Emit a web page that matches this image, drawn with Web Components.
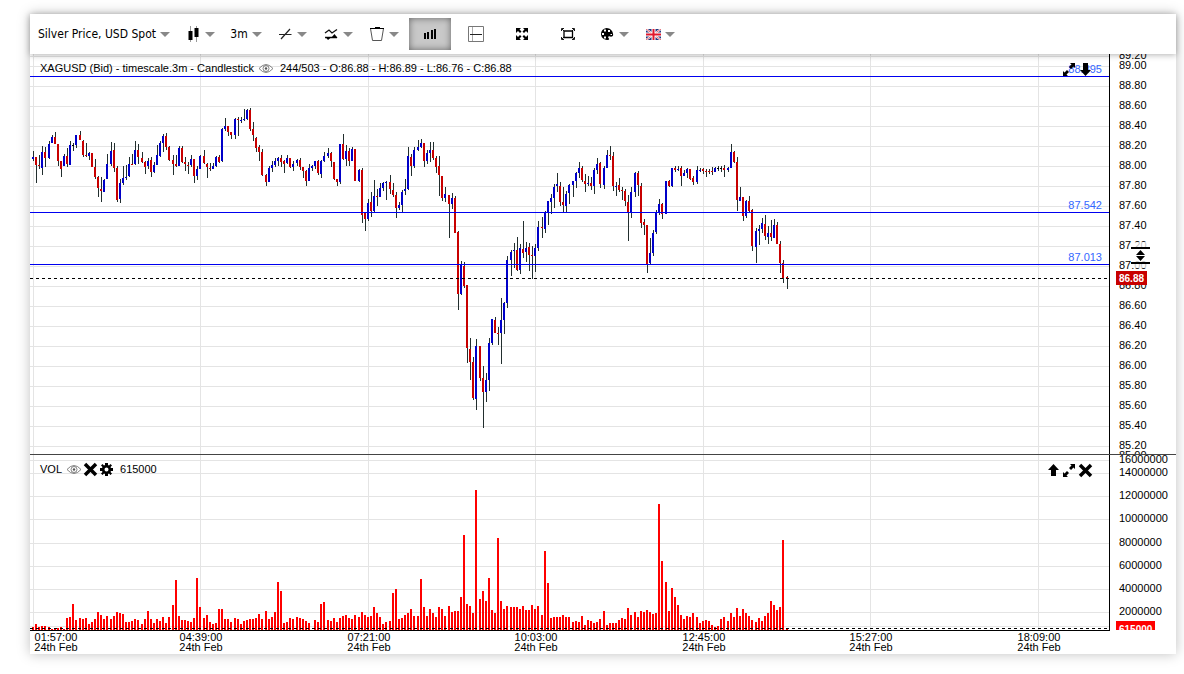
<!DOCTYPE html>
<html lang="en">
<head>
<meta charset="utf-8">
<title>Silver Price, USD Spot</title>
<style>
body {
    margin: 0;
    background: #fff;
    color: #000;
    font-family: "Liberation Sans", Arial, sans-serif;
    font-size: 11px;
}
</style>
</head>
<body>
<stock-chart>
    <chart-toolbar slot="toolbar">
        <tool-button label="Instrument" menu wide>Silver Price, USD Spot</tool-button>
        <tool-button label="Chart type" menu icon="candles"></tool-button>
        <tool-button label="Interval" menu>3m</tool-button>
        <tool-button label="Draw line" menu icon="line"></tool-button>
        <tool-button label="Indicators" menu icon="waves"></tool-button>
        <tool-button label="Remove" menu icon="trash"></tool-button>
        <tool-button label="Volume" pressed icon="bars"></tool-button>
        <tool-button label="Crosshair" icon="split"></tool-button>
        <tool-button label="Full window" icon="expand"></tool-button>
        <tool-button label="Fit" icon="frame"></tool-button>
        <tool-button label="Theme" menu icon="palette"></tool-button>
        <tool-button label="Language" menu icon="flag"></tool-button>
    </chart-toolbar>
    <price-pane>
        <pane-legend>
            XAGUSD (Bid) - timescale.3m - Candlestick
            <icon-button slot="tools" icon="eye" label="Show or hide"></icon-button>
            <span slot="value">244/503 - O:86.88 - H:86.89 - L:86.76 - C:86.88</span>
        </pane-legend>
        <icon-button slot="actions" icon="maximize" label="Maximize"></icon-button>
        <icon-button slot="actions" icon="down" label="Move down"></icon-button>
    </price-pane>
    <volume-pane>
        <pane-legend>
            VOL
            <icon-button slot="tools" icon="eye" label="Show or hide"></icon-button>
            <icon-button slot="tools" icon="cross" label="Remove"></icon-button>
            <icon-button slot="tools" icon="gear" label="Settings"></icon-button>
            <span slot="value">615000</span>
        </pane-legend>
        <icon-button slot="actions" icon="up" label="Move up"></icon-button>
        <icon-button slot="actions" icon="maximize" label="Maximize"></icon-button>
        <icon-button slot="actions" icon="cross" label="Remove"></icon-button>
    </volume-pane>
    <time-axis></time-axis>
</stock-chart>

<script>
// 54 bars (2h42m of 3 minute candles) between two time labels
const BAR_PITCH = 3.10086;
const FIRST_BAR = 3;
const BARS_PER_LABEL = 54;
const TIMES = ["01:57:00", "04:39:00", "07:21:00", "10:03:00", "12:45:00", "15:27:00", "18:09:00"];

// high, body top, body bottom, low in cents below 89.66; u = up, d = down, n = unchanged
const CANDLES = `
151,157,159,161u 157,157,165,183d 155,165,166,169d 146,152,168,175u 147,152,158,167d 141,144,158,159u
135,137,143,143u 132,137,144,144d 144,144,161,166d 161,161,169,177d 154,156,166,166u 148,156,164,167d
141,145,165,165u 143,145,146,151n 135,135,145,148u 131,135,140,140d 140,141,155,157d 143,155,156,157d
152,153,156,160u 153,153,167,167d 159,167,177,179d 176,177,188,197d 177,189,191,202d 179,180,192,192u
154,164,179,179u 142,151,164,166u 143,150,168,172d 166,168,200,202d 179,183,199,203u 166,178,183,185u
165,177,178,180u 157,164,176,177u 154,164,165,165d 141,150,164,165u 144,150,157,164d 152,158,162,163d
161,162,167,174d 158,161,166,169u 157,160,172,177d 162,165,172,173u 145,155,165,165u 141,143,156,157u
134,136,143,152u 133,136,147,150d 146,147,160,161d 155,160,164,175d 155,164,166,167d 146,148,166,166u
146,148,162,163d 157,162,164,171d 162,165,166,174d 155,159,165,167u 159,159,176,183d 166,169,176,180u
155,156,169,169u 150,156,163,164d 163,164,167,178d 163,168,169,171d 163,166,169,169u 156,157,166,167u
155,157,162,163d 128,129,161,162u 118,126,129,131u 126,126,132,136d 132,132,135,139d 118,119,135,139u
117,119,120,136d 117,120,121,123u 109,119,120,121u 109,110,119,120u 108,110,129,131d 122,129,135,141d
137,138,148,152d 145,147,152,161d 149,152,175,176d 174,175,182,186d 166,168,182,182u 161,165,168,172u
158,161,165,167u 157,158,161,166u 155,158,162,167d 160,161,164,173d 155,158,163,164u 158,158,167,168d
161,164,167,171u 159,160,163,166u 158,160,167,170d 167,167,171,178d 170,171,181,186d 164,168,181,181u
165,166,168,171u 161,161,166,169u 160,161,173,175d 160,161,174,178u 152,156,161,162u 148,153,156,158u
152,153,161,167d 162,162,179,180d 179,179,182,186d 144,144,182,184u 134,144,159,160d 145,151,159,166u
148,151,161,166d 147,149,161,161u 149,149,181,181d 169,170,181,182u 168,170,215,223d 212,212,219,231d
199,203,219,221u 192,202,211,217d 180,196,211,212u 189,196,197,206d 183,188,197,197u 182,183,188,191u
181,182,183,200u 175,182,189,194d 183,190,195,197d 192,195,208,218d 202,205,208,210u 190,192,205,212u
179,189,191,195u 147,156,189,190u 154,157,166,176d 147,150,166,168u 140,147,150,151u 139,143,147,148u
143,143,161,167d 150,153,161,164u 142,150,153,162u 142,150,158,160d 156,158,167,173d 156,166,175,196d
176,176,198,201d 187,194,198,202u 195,195,204,238d 193,198,204,209u 196,198,233,233d 231,232,294,310d
261,264,294,295u 262,266,286,288d 285,285,348,363d 338,349,362,380d 357,362,398,400d 339,346,399,410u
346,346,378,381d 366,378,392,428d 373,380,392,402u 338,343,380,391u 319,319,343,345u 317,320,333,333d
327,333,334,345d 298,320,333,364u 302,303,320,334u 256,260,303,308u 250,252,260,276u 243,250,251,268u
237,250,270,271d 244,248,270,274u 221,249,253,258d 242,248,252,262u 243,247,255,271d 246,255,256,279d
244,248,256,272u 221,227,248,251u 217,227,228,238d 211,212,229,233u 201,201,213,225u 194,198,202,214u
184,187,198,208u 173,184,186,192u 182,186,202,206d 187,202,205,212d 191,194,206,212u 184,185,193,204u
181,181,185,197u 172,173,181,188u 162,168,173,178u 166,168,180,182d 174,181,184,192d 176,183,184,186u
177,183,186,190d 168,170,186,194u 158,164,170,174u 162,163,184,188d 166,168,185,189u 150,155,168,168u
146,155,156,160d 152,156,186,191d 182,186,187,196u 178,185,190,192d 187,190,191,200d 189,191,201,206d
195,202,213,241d 187,192,213,218u 172,173,192,197u 171,173,185,196d 183,186,223,228d 219,222,225,235d
225,225,265,273d 238,253,263,265u 230,233,253,256u 210,213,232,234u 199,204,213,215u 203,204,214,219d
181,181,214,214u 180,181,186,187d 168,168,186,187u 166,168,170,172d 166,169,170,171u 166,168,176,186d
170,173,176,176u 168,169,173,178u 169,169,179,180d 176,178,182,185d 166,170,182,184u 168,170,171,172u
168,169,171,174d 169,171,172,177d 169,171,172,174d 167,171,172,175d 167,168,172,172u 166,168,169,171n
166,168,169,172n 165,168,170,177d 167,168,170,172u 144,152,168,168u 151,152,162,163d 157,162,200,211d
187,197,201,201u 197,197,216,221d 200,201,216,218u 196,201,211,213d 209,210,246,251d 228,231,247,263u
225,229,231,245u 218,223,229,233u 215,224,236,240d 226,233,237,244u 220,233,237,241d 219,225,238,238u
222,225,244,244d 241,244,263,273d 260,263,278,283d 276,277,278,289d`.trim().split(/\s+/);

// bar heights, one unit is about 86000 traded
const VOLUMES = [
    3, 6, 3, 4, 4, 3, 1, 2, 2, 3, 1, 12, 13, 26, 10, 12, 11, 12, 6, 8, 11, 18, 15, 11, 14, 11, 14, 18, 17, 16,
    8, 8, 9, 11, 10, 6, 11, 19, 11, 7, 11, 9, 13, 7, 13, 25, 50, 14, 10, 10, 9, 8, 12, 52, 23, 12, 15, 8, 6, 7,
    21, 21, 11, 11, 8, 12, 11, 6, 9, 10, 11, 11, 12, 16, 11, 19, 11, 13, 18, 48, 39, 7, 8, 12, 11, 13, 12, 11, 9, 7,
    0, 10, 8, 26, 28, 10, 9, 12, 8, 12, 14, 15, 12, 11, 15, 13, 18, 15, 13, 14, 23, 17, 13, 6, 8, 9, 37, 41, 11, 12,
    15, 17, 21, 14, 14, 51, 23, 14, 21, 17, 13, 23, 21, 14, 24, 18, 19, 19, 33, 95, 26, 24, 17, 140, 31, 39, 29, 52, 20, 17,
    92, 29, 21, 24, 23, 23, 23, 21, 24, 20, 20, 25, 21, 24, 15, 79, 47, 12, 13, 13, 13, 15, 13, 13, 8, 9, 8, 14, 5, 10,
    9, 7, 8, 11, 19, 5, 7, 7, 7, 10, 12, 11, 22, 15, 18, 13, 19, 18, 20, 18, 16, 17, 126, 69, 48, 19, 42, 33, 25, 15,
    11, 14, 13, 17, 13, 7, 9, 10, 9, 5, 3, 4, 11, 13, 9, 17, 13, 22, 14, 21, 17, 14, 10, 8, 12, 9, 14, 17, 29, 25,
    20, 23, 90, 1
];

const ICONS = {
    candles: `<path d="M5.500 0v16M11.500 0v16" stroke="#999"/><path d="M3.500 5h4v9h-4zM9.500 2h4v9h-4z"/>`,
    line: `<path d="M2 8.500h12.500M4 13l9-10" fill="none" stroke="#222" stroke-width="1.200"/>`,
    waves: `<path d="M2 7l4-3 3 3 5-3.500M2 11.500h12" fill="none" stroke="#111" stroke-width="1.300"/><path d="M2.500 11h6L5 14zM8 12l3.500-4 3 4z"/>`,
    trash: `<path d="M1.500 2.500h13l-2 12h-9z" fill="none" stroke="#555"/><path d="M6 1h5v1h4v1H1V2h5z"/>`,
    bars: `<path d="M2 7h2v6H2zM5 6h2v7H5zM9 4h2v9H9zM12 3h2v10h-2z"/>`,
    split: `<path d="M.5.5h15v15H.5z" fill="none" stroke="#777"/><path d="M4.500 1v14" stroke="#aaa"/><path d="M2 8h12v1H2z" fill="#222"/>`,
    expand: `<path d="M2 2h5L5.500 3.500 7.500 5.500 6 7 4 5 2 7zM14 2H9l1.500 1.500-2 2L10 7l2-2 2 2zM2 14h5l-1.500-1.500 2-2L6 9l-2 2-2-2zM14 14H9l1.500-1.500-2-2L10 9l2 2 2-2z"/>`,
    frame: `<path d="M4 5h8.500v6.500H4z" fill="none" stroke="#000" stroke-width="1.300"/><path d="M1.500 5V2.500H4M12 2.500h2.500V5M14.500 11v2.500H12M4 13.500H1.500V11M2 3l2 2M14 3l-2 2M14 13l-2-2M2 13l2-2" fill="none" stroke="#000" stroke-width=".9"/>`,
    palette: `<path fill-rule="evenodd" d="M7.500 2a6 6 0 1 0 1 12c2 0 2-1 1-2s0-2 1.500-1.500S15 10 14 8c0-3-3-6-6.500-6zM3 7h2v2H3zM5 3.500h2v2H5zM9 4h2v2H9zM5 10.500h2v2H5z"/><path d="M11.500 8h1.500v1h-1.500z" fill="#fff"/>`,
    flag: `<svg x="1" y="3" width="15" height="11" viewBox="0 0 15 11"><path d="M0 0h15v11H0z" fill="#24367d"/><path d="M0 0l15 11M15 0L0 11" stroke="#fff" stroke-width="2"/><path d="M0 0l15 11M15 0L0 11" stroke="#d8202f" stroke-width=".7"/><path d="M7.500 0v11M0 5.500h15" stroke="#fff" stroke-width="4"/><path d="M7.500 0v11M0 5.500h15" stroke="#e0182d" stroke-width="2"/></svg>`,
    eye: `<path d="M1 8.500q7-8 14 0q-7 8-14 0z" fill="none" stroke="#666" stroke-width=".8"/><circle cx="8" cy="8.500" r="3" fill="none" stroke="#666" stroke-width=".8"/><circle cx="8" cy="8.500" r="1.200" fill="#555"/>`,
    cross: `<path d="M3 3l11 11M14 3L3 14" stroke="#000" stroke-width="3.500"/>`,
    gear: `<path fill-rule="evenodd" d="M7 2h3v2l1 .5L12.500 3 14 4.500 12.500 6l.5 1h2v3h-2l-.5 1 1.500 1.500-1.500 1.500-1.500-1.500-1 .5v2H7v-2l-1-.5L4.500 14 3 12.500 4.500 11 4 10H2V7h2l.5-1L3 4.500 4.500 3 6 4.500 7 4zM8.500 6.500a2 2 0 1 0 0 4 2 2 0 0 0 0-4z"/>`,
    maximize: `<path d="M9 2h5v5l-1.500-1.500L10 8 8 6l2.500-2.500zM2 15v-5l1.500 1.500L6 9l2 2-2.500 2.500L7 15z"/>`,
    down: `<path d="M6 2h5v7h3l-5.500 6L3 9h3z"/>`,
    up: `<path d="M8.500 2L14 8h-3v6H6V8H3z"/>`
};

function icon(name) {
    return `<svg width="16" height="16" viewBox="0 0 16 16" aria-hidden="true">${ICONS[name] || ""}</svg>`;
}
function barX(index) {
    return FIRST_BAR + Math.round(index * BAR_PITCH);
}
function rect(x, y, width, height, cls) {
    return `<rect x="${x}" y="${y}" width="${width}" height="${height}" class="${cls}"/>`;
}
function verticalGrid() {
    return TIMES.map((t, i) => rect(barX(i * BARS_PER_LABEL), 0, 1, "100%", "grid")).join("");
}
function horizontalGrid(ticks) {
    return ticks.map(t => rect(0, t.y, "100%", 1, "grid")).join("");
}
function axisLabels(ticks) {
    return ticks.map(t => `<text x="9" y="${t.y + 3}">${t.text}</text>`).join("");
}
function dashedLine(y) {
    return `<path d="M0 ${y}h4000v1H0z" fill="url(#dash)"/>`;
}
const DASH_PATTERN = `<defs><pattern id="dash" width="6" height="8" patternUnits="userSpaceOnUse"><rect width="3" height="8"/></pattern></defs>`;

class StockChart extends HTMLElement {
    constructor() {
        super();
        this.attachShadow({ mode: 'open' });
        this.shadowRoot.innerHTML = `
          <style>
            :host { display: block; padding: 14px 8px 20px 30px; }
            .card {
              display: flex;
              flex-direction: column;
              background: #fff;
              box-shadow: 0 0 12px rgba(0, 0, 0, 0.25);
            }
          </style>
          <div class="card">
            <slot name="toolbar"></slot>
            <slot></slot>
          </div>
        `;
    }
}

class ChartToolbar extends HTMLElement {
    constructor() {
        super();
        this.attachShadow({ mode: 'open' });
        this.shadowRoot.innerHTML = `
          <style>
            :host {
              display: flex;
              gap: 4px;
              padding: 4px 3px;
              background: #fff;
              position: relative;
              z-index: 1;
              box-shadow: 0 1px 6px rgba(0, 0, 0, 0.3);
            }
          </style>
          <slot></slot>
        `;
    }
}

class ToolButton extends HTMLElement {
    constructor() {
        super();
        this.attachShadow({ mode: 'open' });
    }
    connectedCallback() {
        const menu = this.hasAttribute("menu");
        const pressed = this.hasAttribute("pressed");
        const name = this.getAttribute("icon");
        this.shadowRoot.innerHTML = `
          <style>
            :host { display: block; }
            button {
              display: flex;
              align-items: center;
              justify-content: center;
              gap: 4px;
              box-sizing: border-box;
              width: 42px;
              height: 32px;
              padding: 0;
              border: 0;
              background: none;
              color: #000;
              font: 12px "DejaVu Sans Condensed", "Noto Sans", sans-serif;
              white-space: nowrap;
            }
            :host([wide]) button { width: 142px; }
            button[aria-pressed="true"] {
              background: #c8c8c8;
              box-shadow: inset 0 0 7px rgba(0, 0, 0, 0.5);
            }
            .caret {
              border: 5px solid transparent;
              border-top-color: #888;
              border-bottom: 0;
            }
          </style>
          <button type="button" ${name ? `aria-label="${this.getAttribute("label")}"` : ""}
            ${menu ? 'aria-haspopup="menu"' : ""} ${pressed ? 'aria-pressed="true"' : ""}>
            ${name ? icon(name) : "<slot></slot>"}
            ${menu ? '<span class="caret"></span>' : ""}
          </button>
        `;
    }
}

class IconButton extends HTMLElement {
    constructor() {
        super();
        this.attachShadow({ mode: 'open' });
    }
    connectedCallback() {
        this.shadowRoot.innerHTML = `
          <style>
            :host { display: block; }
            button { display: block; padding: 0; border: 0; background: none; }
            svg { display: block; }
          </style>
          <button type="button" aria-label="${this.getAttribute("label")}">${icon(this.getAttribute("icon"))}</button>
        `;
    }
}

class PaneLegend extends HTMLElement {
    constructor() {
        super();
        this.attachShadow({ mode: 'open' });
        this.shadowRoot.innerHTML = `
          <style>
            :host { display: flex; align-items: center; height: 16px; }
            .tools { display: flex; padding: 0 6px 0 4px; }
          </style>
          <span><slot></slot></span>
          <div class="tools"><slot name="tools"></slot></div>
          <slot name="value"></slot>
        `;
    }
}

// common frame of a pane: plot, value axis, legend and actions over the plot
class ChartPane extends HTMLElement {
    constructor() {
        super();
        this.attachShadow({ mode: 'open' });
    }
    connectedCallback() {
        this.shadowRoot.innerHTML = `
          <style>
            :host { display: flex; position: relative; height: ${this.paneHeight}px; }
            .plot { flex: 1; min-width: 0; border-right: 1px solid #000; }
            .axis { flex: none; width: 66px; }
            svg { display: block; width: 100%; height: 100%; shape-rendering: crispEdges; }
            .axis svg { font-size: 11px; overflow: ${this.axisOverflow}; }
            .grid { fill: #e4e4e4; }
            .wick { fill: #222e2e; }
            .u { fill: #0000c8; }
            .d { fill: #c80000; }
            .n { fill: #000; }
            .level { fill: #0000f0; }
            .volume, .volume-tag { fill: #f00; }
            .level-label { fill: #36f; font-size: 11px; text-anchor: end; }
            .tag { fill: #fff; font-size: 10px; font-weight: bold; }
            .legend { position: absolute; left: 10px; top: 6px; }
            .actions { position: absolute; right: 83px; top: 7px; display: flex; }
            .scale {
              position: absolute;
              right: 26px;
              top: 188px;
              width: 19px;
              height: 26px;
              padding: 0;
              border: 0;
              background: rgba(255, 255, 255, 0.75);
            }
            .scale svg { shape-rendering: auto; }
          </style>
          <div class="plot"><svg>${DASH_PATTERN}${this.drawPlot()}</svg></div>
          <div class="axis"><svg>${this.drawAxis()}</svg></div>
          <div class="legend"><slot></slot></div>
          <div class="actions"><slot name="actions"></slot></div>
          ${this.drawOverlay()}
        `;
    }
    drawOverlay() {
        return "";
    }
}

class PricePane extends ChartPane {
    constructor() {
        super();
        this.paneHeight = 400;
        this.axisOverflow = "hidden";
        this.ticks = [{ y: 2, text: "89.20" }];
        for (let cents = 8900; cents > 8500; cents -= 20) {
            this.ticks.push({ y: this.priceY(cents), text: (cents / 100).toFixed(2) });
        }
        this.ticks.push({ y: 402, text: "85.00" });
        this.levels = [{ y: 22, text: "88.895" }, { y: 158, text: "87.542" }, { y: 210, text: "87.013" }];
    }
    priceY(cents) {
        return 8912 - cents;
    }
    drawPlot() {
        let out = horizontalGrid(this.ticks) + verticalGrid();
        CANDLES.forEach((candle, i) => {
            const [high, top, bottom, low] = candle.slice(0, -1).split(",").map(v => this.priceY(8966 - v));
            const x = barX(i);
            out += rect(x, high, 1, low - high, "wick");
            out += rect(x - 1, top, 2, bottom - top, candle.slice(-1));
        });
        this.levels.forEach(level => {
            out += rect(0, level.y, "100%", 1, "level");
            out += `<svg x="100%" overflow="visible"><text x="-7" y="${level.y - 3}" class="level-label">${level.text}</text></svg>`;
        });
        return out + dashedLine(224);
    }
    drawAxis() {
        return axisLabels(this.ticks) + rect(6, 217, 31, 14, "d") + `<text x="9" y="228" class="tag">86.88</text>`;
    }
    drawOverlay() {
        return `<button type="button" class="scale" aria-label="Scale price axis">
            <svg viewBox="0 0 19 26"><path d="M0 5h19v2H0zM0 20h19v2H0zM9.500 8l4.500 5h-9zM9.500 19l4.500-5h-9z"/></svg>
        </button>`;
    }
}

class VolumePane extends ChartPane {
    constructor() {
        super();
        this.paneHeight = 175;
        this.axisOverflow = "hidden";
        this.ticks = [
            { y: 5, text: "16000000" },
            { y: 18, text: "14000000" },
            { y: 41, text: "12000000" },
            { y: 64, text: "10000000" },
            { y: 88, text: "8000000" },
            { y: 111, text: "6000000" },
            { y: 134, text: "4000000" },
            { y: 157, text: "2000000" },
            { y: 171, text: "" }
        ];
    }
    drawPlot() {
        let out = horizontalGrid(this.ticks) + verticalGrid();
        VOLUMES.forEach((v, i) => {
            out += rect(barX(i) - 1, this.paneHeight - v, 2, v, "volume");
        });
        return out + dashedLine(173);
    }
    drawAxis() {
        return axisLabels(this.ticks) + rect(6, 166, 39, 14, "volume-tag") + `<text x="9" y="178" class="tag">615000</text>`;
    }
}

class PaneDivider extends HTMLElement {
    constructor() {
        super();
        this.attachShadow({ mode: 'open' });
        this.shadowRoot.innerHTML = `<style>:host { display: block; height: 1px; background: #444; }</style>`;
    }
}

class TimeAxis extends HTMLElement {
    constructor() {
        super();
        this.attachShadow({ mode: 'open' });
        const labels = TIMES.map((time, i) => {
            const x = Math.max(barX(i * BARS_PER_LABEL), 25) + 1;
            return `<text x="${x}" y="10">${time}</text><text x="${x}" y="20">24th Feb</text>`;
        });
        this.shadowRoot.innerHTML = `
          <style>
            :host { display: block; height: 24px; padding-right: 66px; }
            svg {
              display: block;
              box-sizing: border-box;
              width: 100%;
              height: 24px;
              border-top: 1px solid #000;
              font-size: 11px;
              text-anchor: middle;
            }
          </style>
          <svg>${labels.join("")}</svg>
        `;
    }
}

customElements.define("stock-chart", StockChart);
customElements.define("chart-toolbar", ChartToolbar);
customElements.define("tool-button", ToolButton);
customElements.define("icon-button", IconButton);
customElements.define("pane-legend", PaneLegend);
customElements.define("price-pane", PricePane);
customElements.define("pane-divider", PaneDivider);
customElements.define("volume-pane", VolumePane);
customElements.define("time-axis", TimeAxis);

// every volume pane sits under a divider
document.querySelectorAll("volume-pane").forEach(pane => pane.before(document.createElement("pane-divider")));
</script>
</body>
</html>
